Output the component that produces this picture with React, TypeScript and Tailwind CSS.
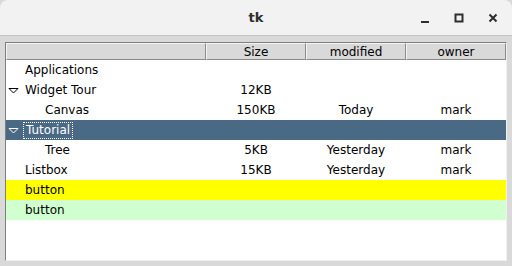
import React from 'react';

type Row = {
  label: string;
  depth: number;
  open?: boolean;
  size?: string;
  modified?: string;
  owner?: string;
  tone?: 'selected' | 'yellow' | 'green';
};

const rows: Row[] = [
  { label: 'Applications', depth: 0 },
  { label: 'Widget Tour', depth: 0, open: true, size: '12KB' },
  { label: 'Canvas', depth: 1, size: '150KB', modified: 'Today', owner: 'mark' },
  { label: 'Tutorial', depth: 0, open: true, tone: 'selected' },
  { label: 'Tree', depth: 1, size: '5KB', modified: 'Yesterday', owner: 'mark' },
  { label: 'Listbox', depth: 0, size: '15KB', modified: 'Yesterday', owner: 'mark' },
  { label: 'button', depth: 0, tone: 'yellow' },
  { label: 'button', depth: 0, tone: 'green' },
];

const toneClass = {
  selected: 'bg-[#4a6984] text-white',
  yellow: 'bg-[#ffff00] text-black',
  green: 'bg-[#d0ffd0] text-black',
};

const Caret = ({ light }: { light: boolean }) => (
  <svg width="11" height="7" viewBox="0 0 11 7" className="shrink-0">
    <path d="M1 1.5 L10 1.5 L5.5 6 Z" fill="none" stroke={light ? '#ffffff' : '#000000'} strokeWidth="1" />
  </svg>
);

const HeaderCell = ({ label, width }: { label: string; width: string }) => (
  <div
    className={`${width} h-full flex items-center justify-center border-t border-l border-t-[#f4f4f4] border-l-[#f4f4f4] border-r border-b border-r-[#8a8a8a] border-b-[#8a8a8a] text-black`}
  >
    {label}
  </div>
);

export default function App() {
  return (
    <div className="w-[512px] h-[266px] bg-[#d9d9d9] flex flex-col text-[12px] font-['DejaVu_Sans',sans-serif] text-black overflow-hidden">
      <div className="h-[36px] shrink-0 bg-[#f2f2f2] rounded-t-[8px] border-b border-[#c4c4c4] flex items-center relative">
        <span className="mx-auto font-bold text-[13px] text-[#2e2e2e]">tk</span>
        <div className="absolute right-[12px] top-0 h-full flex items-center gap-[20px] text-[#2e2e2e]">
          <svg width="14" height="14" viewBox="0 0 14 14"><rect x="3" y="10" width="8" height="2" fill="#2e2e2e" /></svg>
          <svg width="14" height="14" viewBox="0 0 14 14"><rect x="3.5" y="3.5" width="7" height="7" fill="none" stroke="#2e2e2e" strokeWidth="2" /></svg>
          <svg width="14" height="14" viewBox="0 0 14 14"><path d="M3.5 3.5 L10.5 10.5 M10.5 3.5 L3.5 10.5" stroke="#2e2e2e" strokeWidth="2" /></svg>
        </div>
      </div>

      <div className="flex-1 pt-[6px] px-[5px] pb-[5px] flex">
        <div className="flex-1 flex flex-col bg-white border border-t-[#7e7e7e] border-l-[#7e7e7e] border-r-[#f0f0f0] border-b-[#f0f0f0]">
          <div className="h-[17px] flex bg-[#d9d9d9]">
            <HeaderCell label="" width="w-[200px]" />
            <HeaderCell label="Size" width="w-[100px]" />
            <HeaderCell label="modified" width="w-[100px]" />
            <HeaderCell label="owner" width="w-[100px]" />
          </div>
          {rows.map((r, i) => {
            const tone = r.tone ? toneClass[r.tone] : '';
            return (
              <div key={i} className={`h-[20px] flex items-center ${tone}`}>
                <div className={`w-[200px] flex items-center ${r.depth ? 'pl-[22px]' : 'pl-[2px]'}`}>
                  <div className="w-[11px] flex items-center justify-center">
                    {r.open && <Caret light={r.tone === 'selected'} />}
                  </div>
                  {r.tone === 'selected' ? (
                    <span className="ml-[5px] px-[2px] outline outline-1 outline-dotted outline-white leading-[15px]">{r.label}</span>
                  ) : (
                    <span className="ml-[6px]">{r.label}</span>
                  )}
                </div>
                <div className="w-[100px] text-center">{r.size}</div>
                <div className="w-[100px] text-center">{r.modified}</div>
                <div className="w-[100px] text-center">{r.owner}</div>
              </div>
            );
          })}
        </div>
      </div>
    </div>
  );
}
